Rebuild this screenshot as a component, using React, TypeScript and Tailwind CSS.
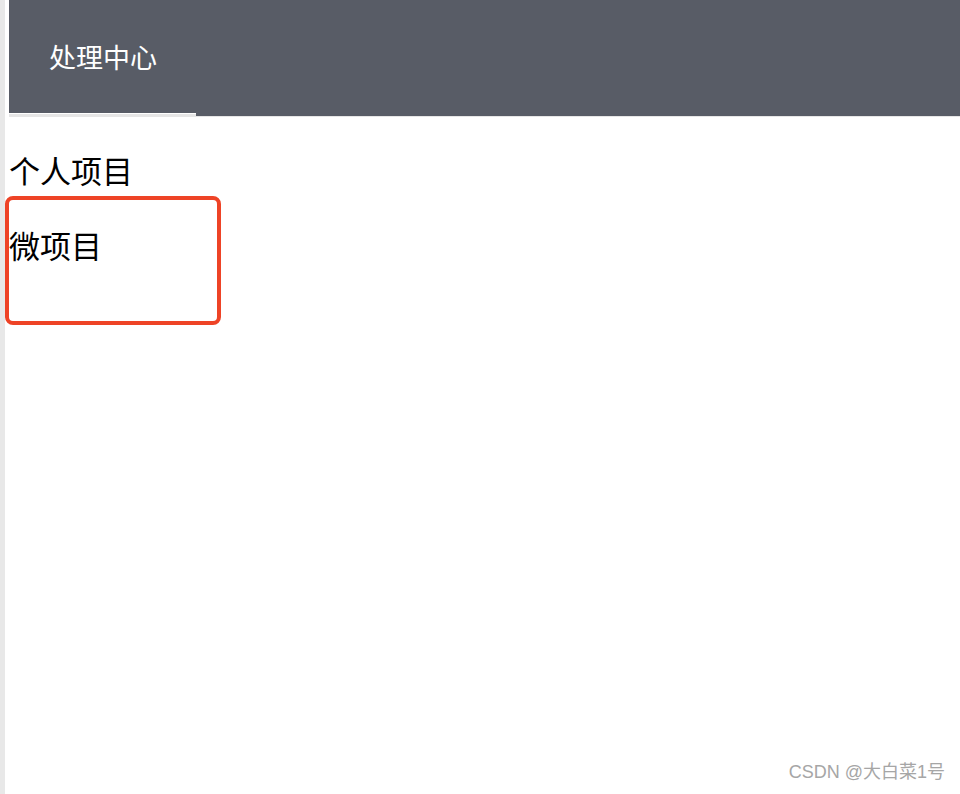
const cjk = { fontFamily: '"Noto Sans CJK SC", "Liberation Sans", sans-serif' };

export default function App() {
  return (
    <div className="relative flex h-[794px] w-[960px] overflow-hidden bg-white" style={cjk}>
      {/* left gutter */}
      <div className="h-full w-[5px] shrink-0 bg-[#e8e8e8]" />
      <div className="w-[4px] shrink-0" />

      <main className="flex flex-1 flex-col">
        <header className="flex">
          <div className="flex w-[187px] flex-col">
            <div className="flex h-[113px] items-center bg-[#585c66] pl-[40px]">
              <span className="text-[27px] leading-none text-white">处理中心</span>
            </div>
            <div className="h-px bg-white" />
            <div className="h-[3px] bg-[#e6e6e6]" />
          </div>
          <div className="flex flex-1 flex-col">
            <div className="h-[116px] bg-[#585c66]" />
            <div className="h-px bg-[#e6e6e6]" />
          </div>
        </header>

        <div className="mt-[33px] text-[31px] leading-[40px] text-black">个人项目</div>
        <div className="mt-[35px] text-[31px] leading-[40px] text-black">微项目</div>
      </main>

      {/* annotation box */}
      <div className="absolute left-[5px] top-[196px] h-[129px] w-[216px] rounded-[8px] border-[4px] border-[#ee4326]" />

      <div
        className="absolute bottom-[8px] right-[15px] text-[18px] text-[#a6a6a6]"
        style={{ fontFamily: '"Liberation Sans", "Noto Sans CJK SC", sans-serif' }}
      >
        CSDN @大白菜1号
      </div>
    </div>
  );
}
